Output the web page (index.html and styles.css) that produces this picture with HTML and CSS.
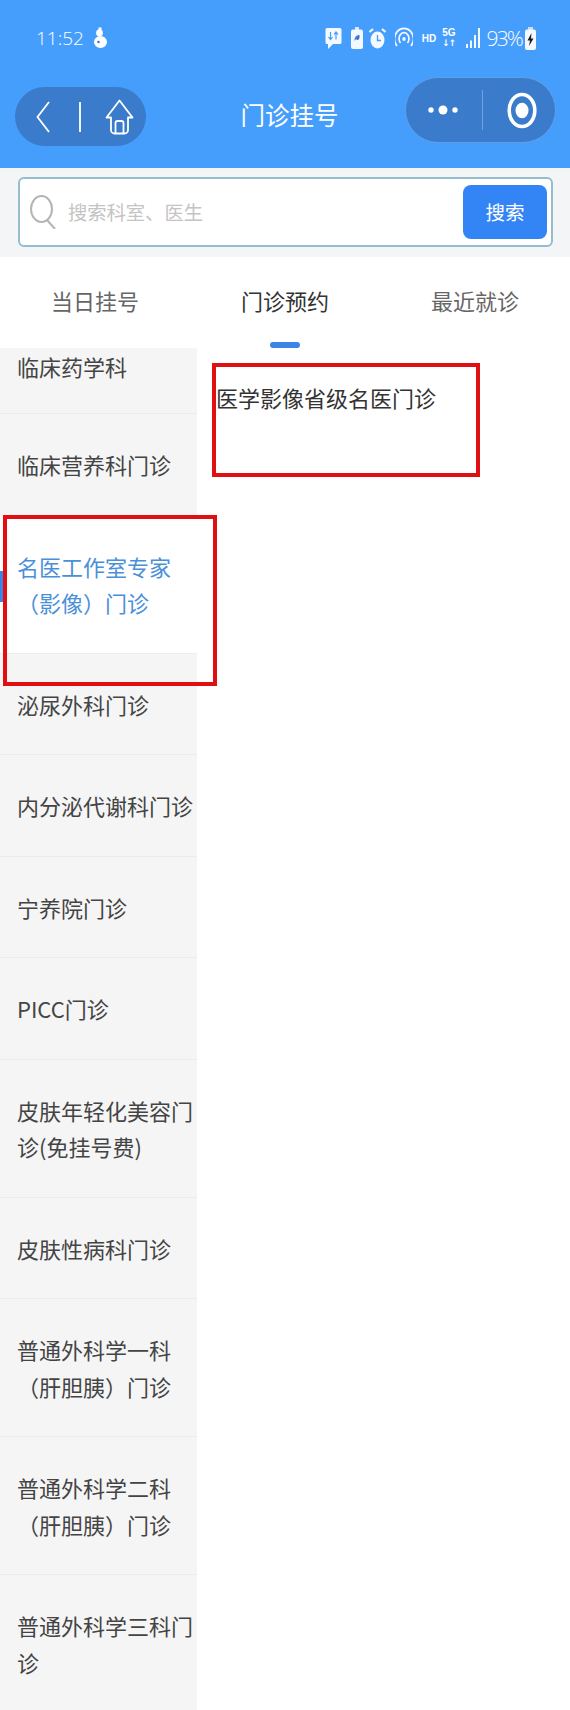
FILE: index.html
```html
<!DOCTYPE html>
<html lang="zh-CN">
<head>
<meta charset="utf-8">
<title>门诊挂号</title>
<link rel="stylesheet" href="styles.css">
</head>
<body>
<div class="page">
  <header class="header">
    <div class="status">
      <div class="status-left">
        <span class="time">11:52</span>
        <svg class="ic-gourd" width="15" height="22" viewBox="0 0 15 22"><circle cx="6.5" cy="6" r="3.4" fill="#fff"/><ellipse cx="7.5" cy="15" rx="6.5" ry="6" fill="#fff"/><circle cx="5.5" cy="15" r="1.3" fill="#3a7ccb"/><rect x="5.5" y="0.5" width="3" height="2.5" fill="#fff"/></svg>
      </div>
      <div class="status-right">
        <svg width="17" height="23" viewBox="0 0 17 23"><path d="M2 1h13a1.5 1.5 0 0 1 1.5 1.500v13a1.500 1.500 0 0 1-1.500 1.500H8l-5 5v-5H2A1.500 1.500 0 0 1 .5 15.500v-13A1.500 1.500 0 0 1 2 1z" fill="#f4f8ff"/><path d="M5.500 5v7M3.500 10l2 2.500 2-2.500M11 12.500v-7M9 7.500l2-2.500 2 2.500" fill="none" stroke="#469efc" stroke-width="1.200"/></svg>
        <svg class="gap-batt" width="12" height="22" viewBox="0 0 12 22"><rect x="4" y="0" width="4" height="3" fill="#dbe9fb"/><rect y="2.500" width="12" height="19.500" rx="2" fill="#f4f8ff"/><path d="M8.500 8c-3 0-5 2-5 6l1.500-2c1 2 3 1 3.500-1z" fill="#3a7ccb"/></svg>
        <svg class="gap-alarm" width="17" height="21" viewBox="0 0 17 21"><ellipse cx="8.500" cy="12" rx="7" ry="8.500" fill="#f4f8ff"/><path d="M8.500 7v5.500h3.500" fill="none" stroke="#469efc" stroke-width="1.300"/><path d="M.5 4l3.500-3M16.500 4L13 1" stroke="#f4f8ff" stroke-width="2"/></svg>
        <svg class="gap-hot" width="18" height="22" viewBox="0 0 18 22" fill="none" stroke="#f4f8ff" stroke-width="1.700"><path d="M2 19A9.500 10.500 0 1 1 16 19"/><path d="M5.500 16a5 6 0 1 1 7 0"/><ellipse cx="9" cy="12" rx="1.700" ry="2" fill="#f4f8ff" stroke="none"/></svg>
        <span class="hd">HD</span>
        <span class="net"><span>5G</span><span class="arrows">↓↑</span></span>
        <svg class="gap-sig" width="15" height="20" viewBox="0 0 15 20" fill="#f4f8ff"><rect x="0" y="16" width="2" height="4"/><rect x="4" y="12.500" width="2" height="7.500"/><rect x="8" y="7" width="2" height="13"/><rect x="12" y="0" width="2" height="20"/></svg>
        <span class="pct">93%</span>
        <svg class="gap-power" width="11" height="23" viewBox="0 0 11 23"><rect x="3" y="0" width="5" height="3" fill="#c9dcf5"/><rect y="2.500" width="11" height="20.500" rx="2" fill="#f4f8ff"/><path d="M6.500 6L2.500 13.500h2.500L4 19l4.500-7.500H6z" fill="#1b1b1b"/></svg>
      </div>
    </div>
    <div class="nav">
      <div class="capsule-left">
        <svg class="ic-back" width="14" height="32" viewBox="0 0 14 32"><path d="M13 1L1.500 16 13 31" fill="none" stroke="#fff" stroke-width="1.800"/></svg>
        <span class="sep-left"></span>
        <svg class="ic-home" width="29" height="36" viewBox="0 0 29 36"><path d="M14.500 1.500L1.500 18.500H6V31a3.500 3.500 0 0 0 3.500 3.500H19.500A3.500 3.500 0 0 0 23 31V18.500H27.500Z" fill="none" stroke="#fff" stroke-width="1.800" stroke-linejoin="round"/><path d="M10.500 34.500V24a2 2 0 0 1 2-2H16.500a2 2 0 0 1 2 2V34.500" fill="none" stroke="#fff" stroke-width="1.800"/></svg>
      </div>
      <div class="title">门诊挂号</div>
      <div class="capsule-right">
        <svg class="ic-dots" width="30" height="12" viewBox="0 0 30 12" fill="#fff"><circle cx="3" cy="6" r="2.700"/><circle cx="15" cy="6" r="4.500"/><circle cx="27" cy="6" r="2.700"/></svg>
        <span class="sep-right"></span>
        <svg class="ic-target" width="30" height="37" viewBox="0 0 30 37"><ellipse cx="15" cy="18.500" rx="12.800" ry="16" fill="none" stroke="#fff" stroke-width="3.600"/><ellipse cx="15" cy="18.500" rx="6.500" ry="7.800" fill="#fff"/></svg>
      </div>
    </div>
  </header>

  <div class="search-area">
    <div class="search-box">
      <svg class="ic-search" width="26" height="34" viewBox="0 0 26 34" fill="none" stroke="#b4b4b4" stroke-width="2"><ellipse cx="11.500" cy="14" rx="10.500" ry="13"/><path d="M17 25l8 9"/></svg>
      <span class="placeholder">搜索科室、医生</span>
      <span class="search-btn">搜索</span>
    </div>
  </div>

  <nav class="tabs">
    <div class="tab">当日挂号</div>
    <div class="tab tab-active">门诊预约</div>
    <div class="tab">最近就诊</div>
  </nav>

  <main class="body">
    <aside class="sidebar">
      <div class="item item-first">临床药学科</div>
      <div class="item">临床营养科门诊</div>
      <div class="item item-active">名医工作室专家（影像）门诊</div>
      <div class="item">泌尿外科门诊</div>
      <div class="item">内分泌代谢科门诊</div>
      <div class="item">宁养院门诊</div>
      <div class="item">PICC门诊</div>
      <div class="item">皮肤年轻化美容门诊(免挂号费)</div>
      <div class="item">皮肤性病科门诊</div>
      <div class="item">普通外科学一科（肝胆胰）门诊</div>
      <div class="item">普通外科学二科（肝胆胰）门诊</div>
      <div class="item">普通外科学三科门诊</div>
    </aside>
    <section class="content">医学影像省级名医门诊</section>
  </main>

  <div class="mark mark-content"></div>
  <div class="mark mark-item"></div>
</div>
</body>
</html>
```
FILE: styles.css
```css
* { box-sizing: border-box; }
html, body { margin: 0; padding: 0; background: #fff; }
body { font-family: "Noto Sans CJK SC", "Noto Sans", sans-serif; }
.page { position: relative; width: 570px; height: 1710px; overflow: hidden; display: flex; flex-direction: column; }

.header { height: 168px; background: #469efc; color: #fff; flex: none; }
.status { height: 76px; display: flex; justify-content: space-between; align-items: center; padding: 0 34px 0 36px; }
.status-left { display: flex; align-items: center; gap: 9px; }
.time { font-family: "Open Sans", sans-serif; font-weight: 300; font-size: 19px; line-height: 24px; }
.status-right { display: flex; align-items: center; }
.gap-batt { margin-left: 9px; }
.gap-alarm { margin-left: 6px; }
.gap-hot { margin-left: 9px; }
.gap-sig { margin-left: 11px; }
.gap-power { margin-left: 3px; }
.hd { margin-left: 9px; font-family: "Liberation Sans", sans-serif; font-size: 10px; font-weight: 700; }
.net { margin-left: 6px; display: flex; flex-direction: column; align-items: center; font-family: "Liberation Sans", sans-serif; font-size: 10px; line-height: 11px; font-weight: 700; }
.arrows { font-family: "DejaVu Sans", sans-serif; font-size: 9px; letter-spacing: -1px; }
.pct { margin-left: 5px; font-family: "Open Sans", sans-serif; font-weight: 300; font-size: 21px; line-height: 24px; letter-spacing: -1.800px; }

.nav { height: 92px; display: flex; align-items: flex-start; padding: 0 14px 0 15px; }
.capsule-left { width: 131px; height: 59px; margin-top: 11px; border-radius: 30px; background: #3a7ccb; display: flex; align-items: center; padding-left: 21px; flex: none; }
.sep-left { width: 2px; height: 30px; background: #fff; margin-left: 29px; opacity: .9; }
.ic-home { margin-left: 24px; }
.title { flex: 1; text-align: center; padding-left: 28px; font-size: 24.500px; line-height: 78px; color: #fff; }
.capsule-right { width: 151px; height: 66px; margin-top: 1px; border-radius: 33px; background: #3a7ccb; border: 1px solid #5f9fe8; display: flex; align-items: center; padding-left: 22px; flex: none; }
.sep-right { width: 1px; height: 40px; background: #6ea3e0; margin-left: 24px; }
.ic-target { margin-left: 24px; }

.search-area { height: 89px; flex: none; padding: 7px 17px 0 18px; background: #f4f5f6; border-top: 2px solid #eef6fb; }
.search-box { height: 70px; background: #fff; border: 2px solid #95bdd0; border-radius: 6px; display: flex; align-items: center; padding: 0 4px 0 10px; }
.ic-search { flex: none; }
.placeholder { flex: 1; margin-left: 12px; font-size: 19.300px; color: #c4c4c4; }
.search-btn { width: 84px; height: 54px; background: #3385f5; border-radius: 8px; color: #fff; font-size: 19.500px; line-height: 54px; text-align: center; }

.tabs { height: 91px; flex: none; display: flex; background: #fff; }
.tab { flex: 1; text-align: center; font-size: 22px; line-height: 87px; color: #666; position: relative; }
.tab-active { color: #333; }
.tab-active::after { content: ""; position: absolute; left: 80px; bottom: 0; width: 30px; height: 6px; border-radius: 3px; background: #3a85e6; }

.body { flex: 1; display: flex; min-height: 0; }
.sidebar { width: 197px; flex: none; background: #f5f5f6; overflow: hidden; }
.item { padding: 32px 0 32px 17px; font-size: 22px; line-height: 36.500px; color: #444; border-bottom: 1px solid #ececed; position: relative; }
.item-first { padding-top: 0; padding-bottom: 28.500px; }
.item-active { background: #fff; color: #4a90d9; }
.item-active::before { content: ""; position: absolute; left: 0; top: 55px; width: 4px; height: 31px; background: #3a85e6; }
.content { flex: 1; padding: 31px 0 0 19px; font-size: 22px; line-height: 36px; color: #333; }

.mark { position: absolute; border: 4px solid #e00f12; }
.mark-content { left: 212px; top: 363px; width: 268px; height: 114px; }
.mark-item { left: 3px; top: 515px; width: 214px; height: 171px; }
```
